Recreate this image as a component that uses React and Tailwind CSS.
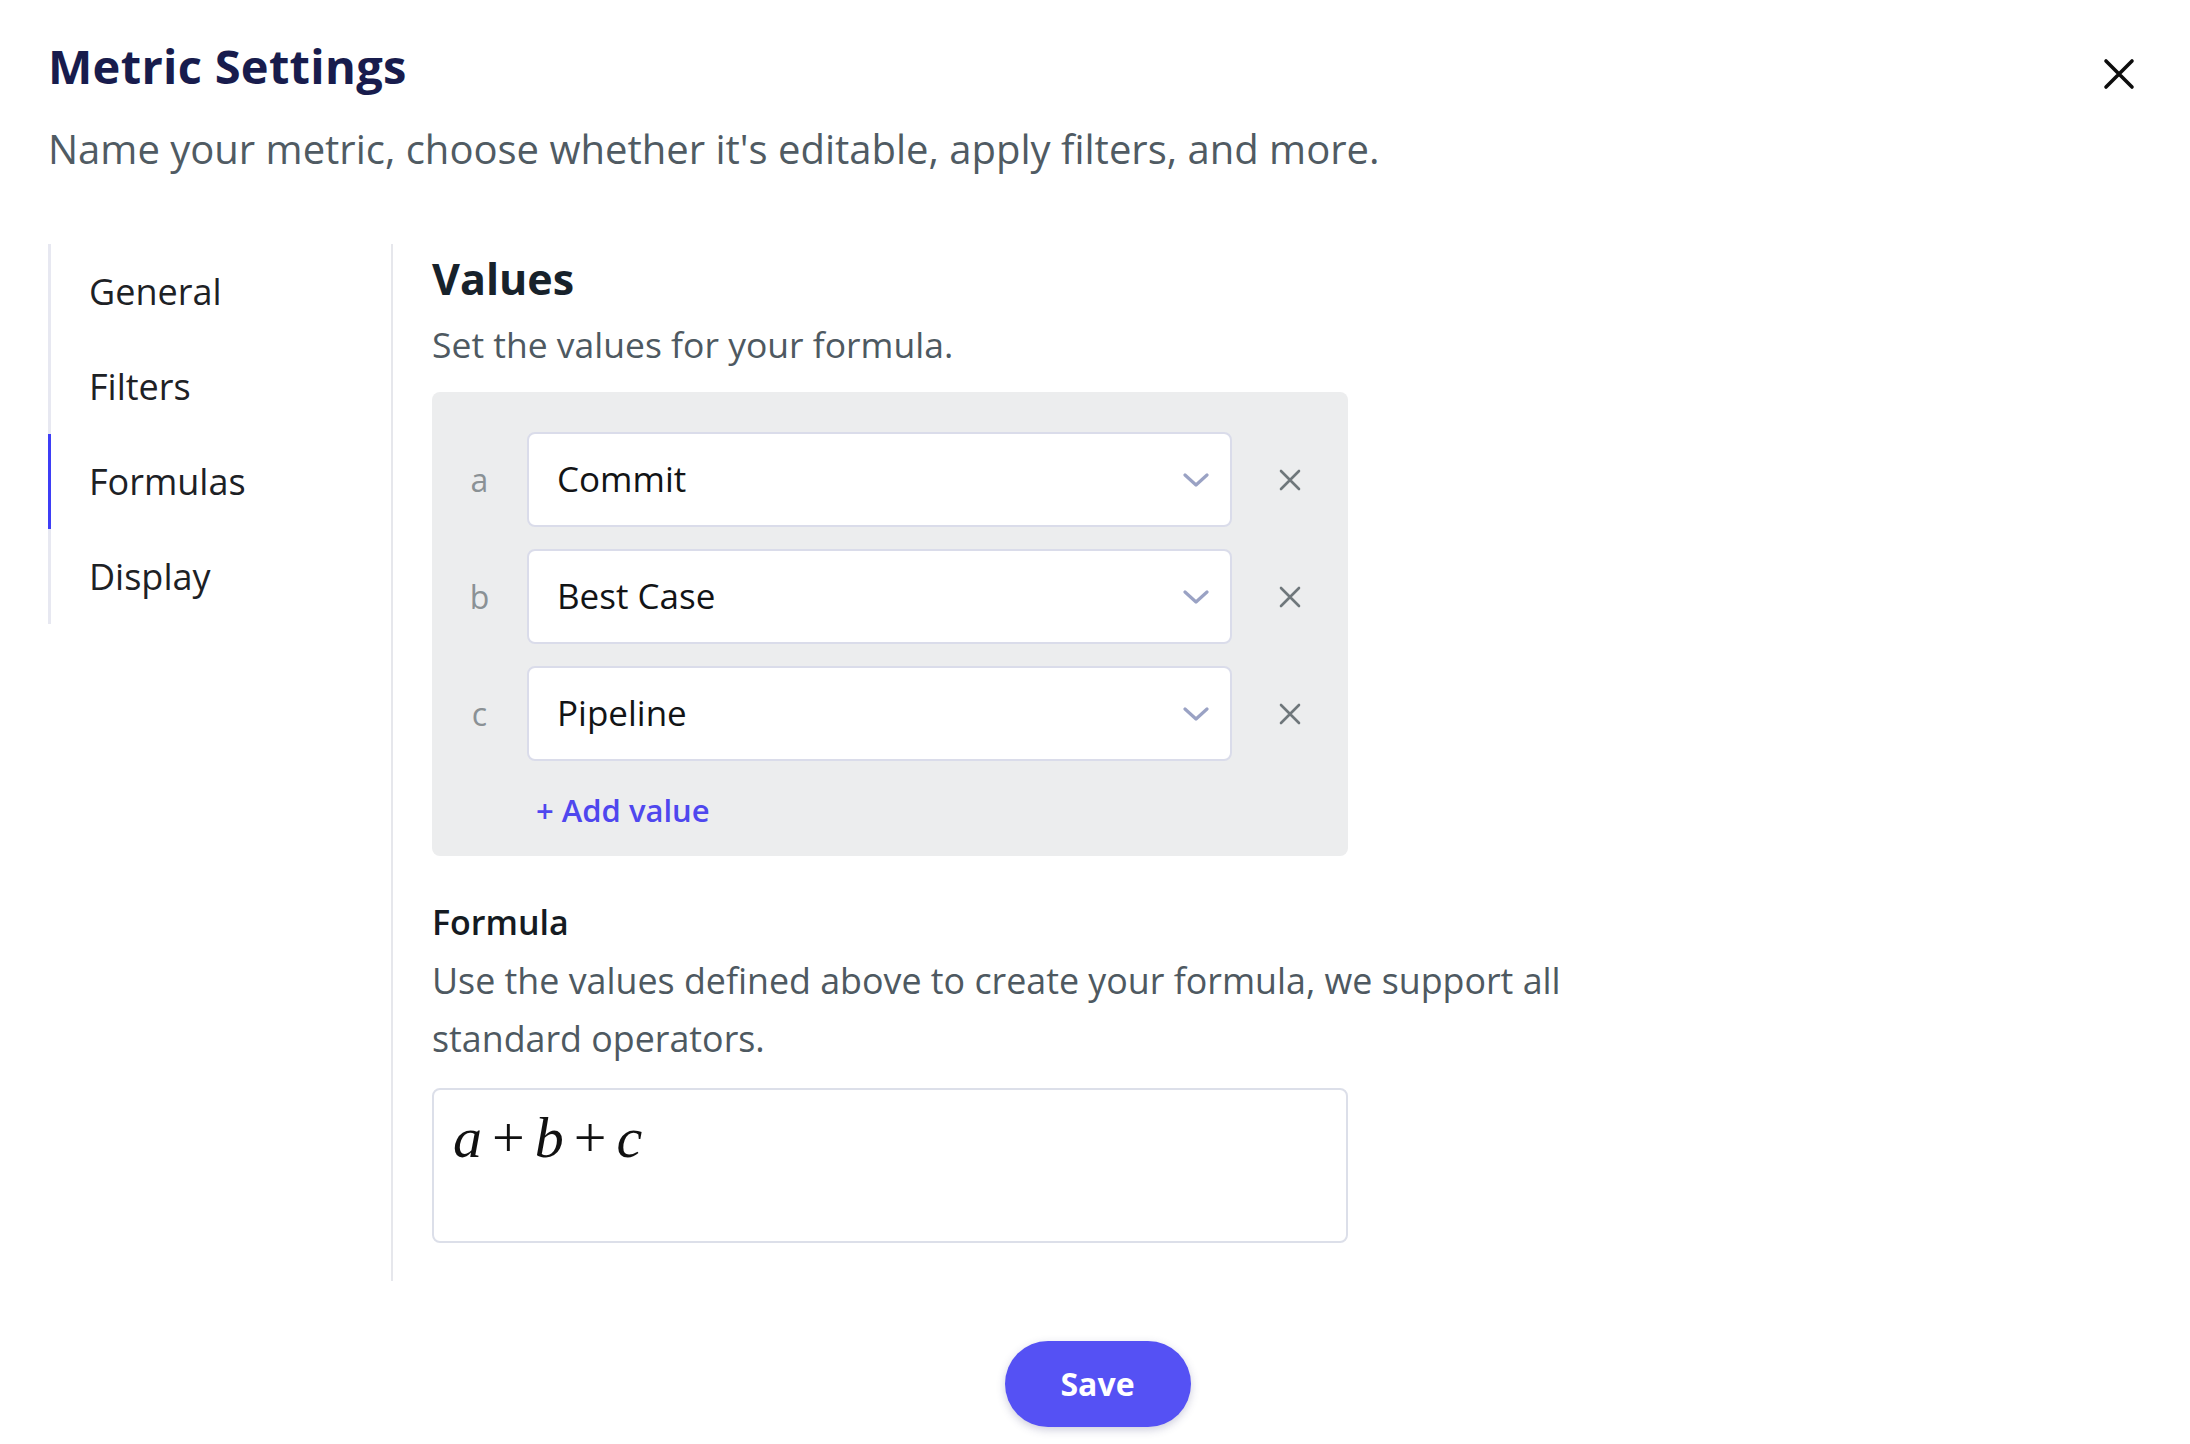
import React from "react";

function Chevron() {
  return (
    <svg width="26" height="16" viewBox="0 0 26 16" fill="none">
      <path d="M2 3 L13 13 L24 3" stroke="#9aa2c4" strokeWidth="3.2" strokeLinecap="round" strokeLinejoin="round" />
    </svg>
  );
}

function SmallX() {
  return (
    <svg width="24" height="24" viewBox="0 0 24 24" fill="none">
      <path d="M3 3 L21 21 M21 3 L3 21" stroke="#6f777b" strokeWidth="2.6" strokeLinecap="round" />
    </svg>
  );
}

function CloseX() {
  return (
    <svg width="32" height="32" viewBox="0 0 32 32" fill="none">
      <path d="M3 3 L29 29 M29 3 L3 29" stroke="#0d0d0d" strokeWidth="3.6" strokeLinecap="round" />
    </svg>
  );
}

const rows = [
  { key: "a", label: "Commit" },
  { key: "b", label: "Best Case" },
  { key: "c", label: "Pipeline" },
];

const nav = ["General", "Filters", "Formulas", "Display"];

export default function App() {
  return (
    <div className="w-[2190px] h-[1444px] bg-white font-['Open_Sans',sans-serif] flex flex-col overflow-hidden">
      <div className="flex justify-between items-start pl-[48px] pr-[55px] pt-[38px]">
        <div className="flex flex-col">
          <h1 className="text-[47px] leading-[56px] font-bold text-[#181c4d] tracking-[0.3px]">Metric Settings</h1>
          <p className="mt-[29px] text-[40px] leading-[52px] text-[#505b63]">
            Name your metric, choose whether it's editable, apply filters, and more.
          </p>
        </div>
        <div className="mt-[20px]">
          <CloseX />
        </div>
      </div>

      <div className="flex mt-[69px] pl-[48px]">
        <div className="w-[343px] flex flex-col self-start">
          {nav.map((n) => (
            <div
              key={n}
              className={
                n === "Formulas"
                  ? "h-[95px] flex items-center pl-[38px] border-l-[3px] border-[#3e3ef6] text-[36px] text-[#1d2125]"
                  : "h-[95px] flex items-center pl-[38px] border-l-[3px] border-[#e7e8f1] text-[36px] text-[#1d2125]"
              }
            >
              {n}
            </div>
          ))}
        </div>

        <div className="border-l-2 border-[#e6e7ec] pl-[39px] pt-[9px] pb-[38px] flex flex-col">
          <h2 className="text-[43px] leading-[52px] font-bold text-[#17222b]">Values</h2>
          <p className="mt-[15px] text-[35.5px] leading-[48px] text-[#4e5961]">Set the values for your formula.</p>

          <div className="mt-[24px] w-[916px] rounded-[8px] bg-[#ecedee] pt-[40px] pb-[26px] flex flex-col">
            <div className="flex flex-col gap-[22px]">
              {rows.map((r) => (
                <div key={r.key} className="flex items-center h-[95px]">
                  <div className="w-[95px] text-center text-[32px] text-[#8a9195]">{r.key}</div>
                  <div className="w-[705px] h-[95px] bg-white border-2 border-[#dadcea] rounded-[8px] flex items-center justify-between pl-[28px] pr-[21px]">
                    <span className="text-[35px] text-[#121416]">{r.label}</span>
                    <Chevron />
                  </div>
                  <div className="w-[116px] flex justify-center">
                    <SmallX />
                  </div>
                </div>
              ))}
            </div>
            <div className="mt-[29px] pl-[104px] text-[31px] leading-[40px] font-semibold text-[#4f47ee]">+ Add value</div>
          </div>

          <h3 className="mt-[44px] text-[34px] leading-[44px] font-semibold text-[#151b22]">Formula</h3>
          <p className="mt-[7px] w-[1220px] text-[35.8px] leading-[58px] text-[#4e5961]">
            Use the values defined above to create your formula, we support all standard operators.
          </p>

          <div className="mt-[21px] w-[916px] h-[155px] border-2 border-[#dcdfe9] rounded-[8px] pl-[19px] pt-[19px]">
            <div className="flex items-baseline text-[58px] leading-none text-[#111] font-['Liberation_Serif',serif]">
              <span className="italic">a</span>
              <span className="mx-[10px]">+</span>
              <span className="italic">b</span>
              <span className="mx-[10px]">+</span>
              <span className="italic">c</span>
            </div>
          </div>
        </div>
      </div>

      <div className="flex justify-center mt-[60px] pl-[5px]">
        <button className="w-[186px] h-[86px] rounded-full bg-[#5551f4] text-white text-[32px] font-bold shadow-[0_3px_8px_rgba(60,60,120,0.25)]">
          Save
        </button>
      </div>
    </div>
  );
}
